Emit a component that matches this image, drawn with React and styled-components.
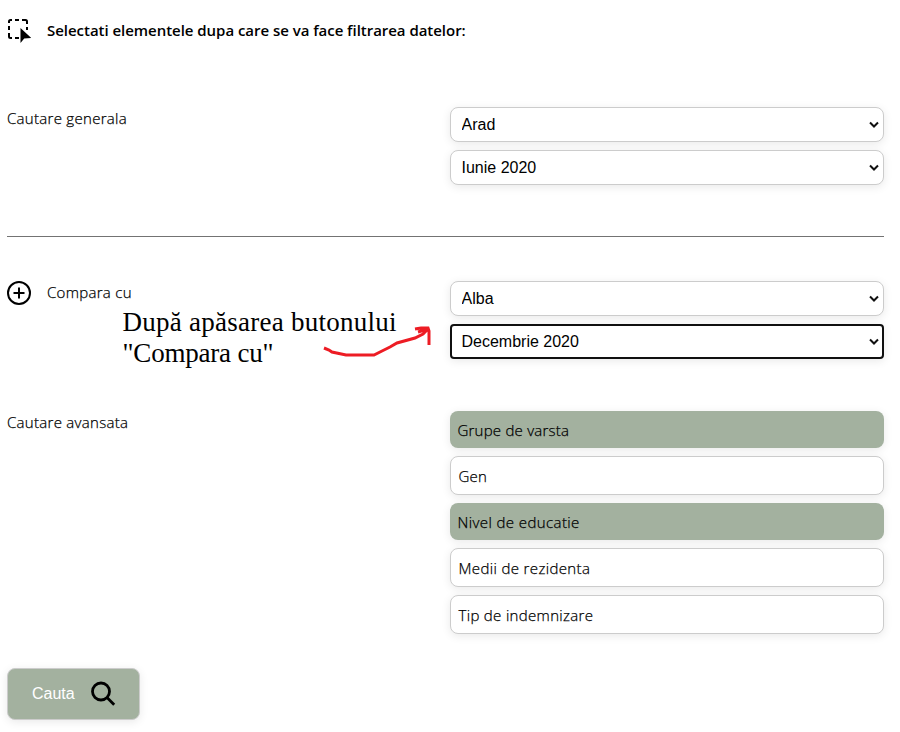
import React from "react";
import styled, { createGlobalStyle } from "styled-components";

const GlobalStyle = createGlobalStyle`
  *, *::before, *::after { box-sizing: border-box; }
  body {
    margin: 0;
    background: #fff;
    color: #000;
    font-family: "Segoe UI", "Open Sans", "Noto Sans", sans-serif;
    font-size: 15px;
    font-weight: 300;
    overflow: hidden;
  }
`;

const Page = styled.main`
  position: relative;
  width: 900px;
  height: 732px;
  padding: 17px 16px 0 7px;
`;

const Heading = styled.header`
  display: flex;
  align-items: center;
  gap: 16px;
  height: 27px;
`;

const Title = styled.h1`
  margin: 0;
  font-size: 15px;
  font-weight: 600;
  line-height: 22px;
  padding-bottom: 2px;
  letter-spacing: -0.035px;
`;

const Section = styled.section`
  display: grid;
  grid-template-columns: 443px 434px;
  align-items: start;
  margin-top: ${(p) => p.$top}px;
`;

const Label = styled.div`
  display: flex;
  align-items: center;
  gap: 16px;
  height: 24px;
  line-height: 22px;
  letter-spacing: 0.29px;
`;

const LabelText = styled.span`
  padding-bottom: 2px;
  -webkit-text-stroke: 0.25px #000;
`;

const Fields = styled.div`
  display: flex;
  flex-direction: column;
  gap: 8px;
`;

const SelectBox = styled.div`
  display: grid;
  grid-template-columns: 1fr 12px;
  align-items: center;
  height: 35px;
  background: #fff;
  border: ${(p) => (p.$focused ? "2px solid #101010" : "1px solid #ccc")};
  border-radius: ${(p) => (p.$focused ? 4 : 8)}px;
  padding: ${(p) => (p.$focused ? "0 2px 0 9.5px" : "0 3px 0 10.5px")};
  box-shadow: 0 2px 10px rgba(0, 0, 0, 0.09);
`;

const NativeSelect = styled.select`
  appearance: none;
  width: 100%;
  margin: 0;
  padding: 0;
  border: 0;
  outline: 0;
  background: transparent;
  color: #000;
  font: 400 16px "Liberation Sans", Arial, sans-serif;
  line-height: 20px;
`;

const Divider = styled.hr`
  height: 1px;
  margin: 51px 0 0;
  border: 0;
  background: #737373;
`;

const Option = styled.div`
  height: ${(p) => (p.$active ? 37 : 39)}px;
  padding: 8px 8px 8px 7.5px;
  line-height: 23px;
  letter-spacing: ${(p) => p.$tracking}px;
  -webkit-text-stroke: 0.25px #000;
  border: ${(p) => (p.$active ? "0" : "1px solid #ccc")};
  border-radius: 8px;
  background: ${(p) => (p.$active ? "#a3b19f" : "#fff")};
  box-shadow: 0 2px 10px rgba(0, 0, 0, 0.09);
`;

const SearchButton = styled.button`
  display: flex;
  align-items: center;
  gap: 15px;
  width: 133px;
  height: 52px;
  margin: 34px 0 0;
  padding: 0 0 0 24px;
  border: 1px solid #ccc;
  border-radius: 8px;
  background: #a3b19f;
  color: #fff;
  font: 400 16px "Liberation Sans", Arial, sans-serif;
  box-shadow: 0 2px 10px rgba(0, 0, 0, 0.09);
`;

const Note = styled.p`
  position: absolute;
  left: 122.5px;
  top: 307px;
  margin: 0;
  font: 400 27px/31px "Liberation Serif", "Times New Roman", serif;
  white-space: nowrap;
`;

const NoteLine = styled.span`
  display: block;
  letter-spacing: ${(p) => p.$tracking}px;
`;

const Arrow = styled.svg`
  position: absolute;
  left: 320px;
  top: 322px;
`;

const SelectIcon = () => (
  <svg width="24" height="27" viewBox="0 0 24 27" fill="none">
    <path
      d="M2 6V4.500Q2 3 3.500 3H5M8 3h4M15 3h3.500Q20 3 20 4.500V7M20 10v3M2 9v4M2 16v3.500Q2 21 3.500 21H5M8 21h4"
      stroke="#000"
      strokeWidth="2"
    />
    <path d="M13.500 11v15l3.700-4.600 7-.4z" fill="#000" />
  </svg>
);

const PlusIcon = () => (
  <svg width="24" height="24" viewBox="0 0 24 24" fill="none" stroke="#000" strokeWidth="2">
    <circle cx="12" cy="12" r="11" />
    <path d="M12 6.500v11M6.500 12h11" />
  </svg>
);

const SearchIcon = () => (
  <svg width="26" height="26" viewBox="0 0 26 26" fill="none" stroke="#000" strokeWidth="2.800">
    <circle cx="11" cy="10.500" r="8.500" />
    <path d="M17 16.500l7.200 7.200" />
  </svg>
);

const Chevron = () => (
  <svg width="12" height="8" viewBox="0 0 12 8" fill="none" stroke="#101010" strokeWidth="2">
    <path d="M2 1.500l4 4 4-4" />
  </svg>
);

function Select({ value, focused }) {
  return (
    <SelectBox $focused={focused}>
      <NativeSelect defaultValue={value}>
        <option>{value}</option>
      </NativeSelect>
      <Chevron />
    </SelectBox>
  );
}

const filters = [
  { label: "Grupe de varsta", active: true, tracking: 0.22 },
  { label: "Gen", tracking: 0.2 },
  { label: "Nivel de educatie", active: true, tracking: 0.4 },
  { label: "Medii de rezidenta", tracking: 0.36 },
  { label: "Tip de indemnizare", tracking: 0.32 },
];

export default function App() {
  return (
    <Page>
      <GlobalStyle />
      <Heading>
        <SelectIcon />
        <Title>Selectati elementele dupa care se va face filtrarea datelor:</Title>
      </Heading>
      <Section $top={63}>
        <Label>
          <LabelText>Cautare generala</LabelText>
        </Label>
        <Fields>
          <Select value="Arad" />
          <Select value="Iunie 2020" />
        </Fields>
      </Section>
      <Divider />
      <Section $top={44}>
        <Label>
          <PlusIcon />
          <LabelText>Compara cu</LabelText>
        </Label>
        <Fields>
          <Select value="Alba" />
          <Select value="Decembrie 2020" focused />
        </Fields>
      </Section>
      <Section $top={52}>
        <Label>
          <LabelText>Cautare avansata</LabelText>
        </Label>
        <Fields>
          {filters.map((f) => (
            <Option key={f.label} $active={f.active} $tracking={f.tracking}>
              {f.label}
            </Option>
          ))}
        </Fields>
      </Section>
      <SearchButton>
        Cauta
        <SearchIcon />
      </SearchButton>
      <Note>
        <NoteLine $tracking={0.25}>După apăsarea butonului</NoteLine>
        <NoteLine $tracking={-0.2}>"Compara cu"</NoteLine>
      </Note>
      <Arrow width="116" height="40" viewBox="0 0 116 40" fill="none" stroke="#ed1c24" strokeWidth="3">
        <path d="M4 26l5 2 3 2 14 3h28l8-4 8-4 7-4 18-5 8-4 6-6M95 7l6-1h7l1 3v14M98 10l10-3" />
      </Arrow>
    </Page>
  );
}
